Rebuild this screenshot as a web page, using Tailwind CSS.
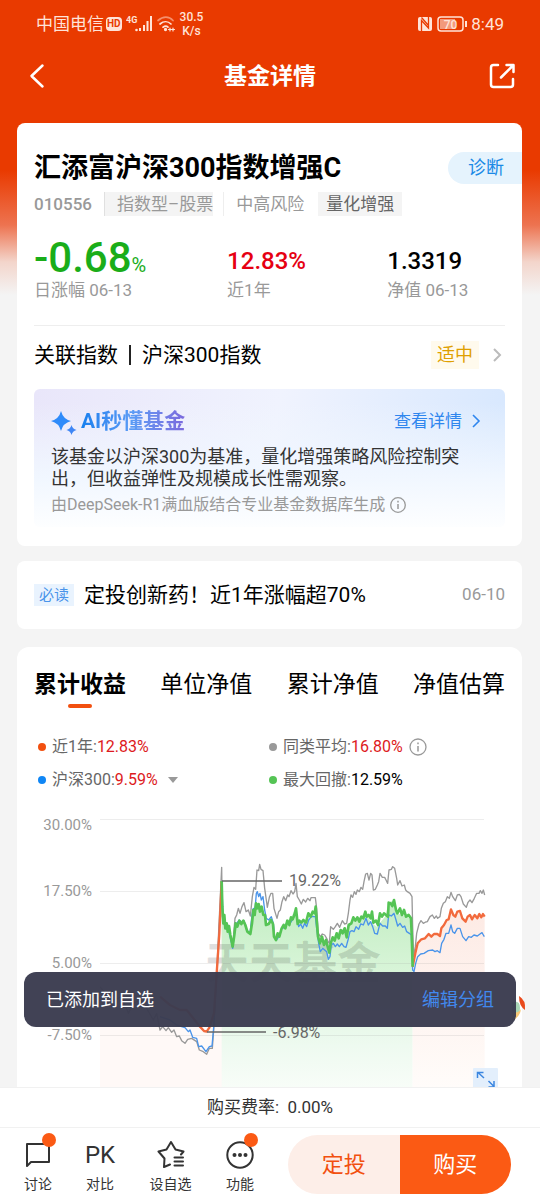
<!DOCTYPE html>
<html lang="zh-CN">
<head>
<meta charset="utf-8">
<meta name="viewport" content="width=device-width, initial-scale=1">
<title>基金详情</title>
<script src="https://cdn.jsdelivr.net/npm/@tailwindcss/browser@4"></script>
</head>
<body class="flex h-screen flex-col overflow-hidden bg-[#f4f4f4] font-['Roboto','Noto_Sans_CJK_SC',sans-serif] text-black">

<div class="relative flex min-h-0 flex-1 flex-col overflow-hidden bg-[linear-gradient(to_bottom,#e93a00_170px,#ed7350_225px,#f3d5cb_262px,#f4f4f4_295px)]">

  <!-- Status bar -->
  <div class="flex h-11 shrink-0 items-center pr-9 pl-9 pt-1 text-[#ffe3d8]">
    <span class="text-[17px] leading-5">中国电信</span>
    <span class="ml-0.5 rounded-sm bg-[#ffe3d8] px-px text-[10px] leading-[14px] font-bold text-[#e93a00]">HD</span>
    <svg class="ml-1 h-5 w-7" viewBox="0 0 28 20" fill="currentColor">
      <text x="0" y="9" font-size="9" font-weight="700" font-family="Roboto">4G</text>
      <circle cx="10.500" cy="16" r="1.300"/><path d="M13 14h2v3h-2zM17 11h2v6h-2zM20.500 7h2v10h-2zM24 2h2v15h-2z"/>
    </svg>
    <svg class="ml-0.5 h-5 w-5" viewBox="0 0 20 20" fill="none" stroke="currentColor" stroke-width="1.700" stroke-linecap="round">
      <path d="M2 6.500C7 2 13 2 17 6.500" opacity=".5"/><path d="M4 10c3.500-3 8-3 11 0"/><path d="M7 13.200c2-1.400 3.500-1.400 5 0"/>
      <circle cx="9.500" cy="15.500" r=".8" fill="currentColor"/><path d="M12.500 15.500h6M14 14v3M17 14v3" stroke-width="1.200"/>
    </svg>
    <span class="ml-1 text-center text-[12px] leading-[14px] font-medium">30.5<br>K/s</span>
    <svg class="ml-auto h-4 w-4" viewBox="0 0 16 16">
      <rect x="1" y="1" width="14" height="14" rx="2" fill="#ffe3d8"/>
      <path d="M4.500 15V4.500l7 7.500V1M4.500 1.500l7 8" fill="none" stroke="#e93a00" stroke-width="1.300"/>
    </svg>
    <svg class="ml-1 h-4 w-8" viewBox="0 0 32 16">
      <rect x="1" y="1" width="25" height="14" rx="3" fill="none" stroke="#ffe3d8" stroke-width="1.500"/>
      <rect x="3" y="3" width="15" height="10" fill="#f29a7c"/><path d="M29 5v6" stroke="#ffe3d8" stroke-width="2"/>
      <text x="13.500" y="12.500" text-anchor="middle" font-size="12" font-weight="500" font-family="Roboto" fill="#ffe3d8">70</text>
    </svg>
    <span class="ml-0.5 text-[17px] leading-5">8:49</span>
  </div>

  <!-- Title bar -->
  <header class="grid h-[79px] shrink-0 grid-cols-3 items-center px-6 pb-3.5 text-white">
    <button type="button" aria-label="返回" class="flex size-7 items-center justify-center">
      <svg class="size-7" viewBox="0 0 28 28" fill="none" stroke="currentColor" stroke-width="2.500" stroke-linecap="round" stroke-linejoin="round"><path d="M18.500 2.500 7.500 13 18.500 23.500"/></svg>
    </button>
    <h1 class="text-center text-[23px] leading-7 font-bold">基金详情</h1>
    <button type="button" aria-label="分享" class="flex size-7 items-center justify-center justify-self-end">
      <svg class="size-7" viewBox="0 0 28 28" fill="none" stroke="currentColor" stroke-width="2.500" stroke-linecap="round" stroke-linejoin="round"><path d="M10 2H5.500Q3 2 3 4.500v17Q3 24 5.500 24h17q2.500 0 2.500-2.500V16M13 14.500 25 2.500M18.500 2H25.500v7"/></svg>
    </button>
  </header>

  <main class="flex flex-col pr-[18px] pl-[17px]">
    <!-- Fund summary -->
    <section class="flex flex-col rounded-lg bg-white px-[17px] pt-[25px] pb-[19px]">
      <div class="flex items-center justify-between">
        <h2 class="text-[27px] leading-10 font-bold">汇添富沪深300指数增强C</h2>
        <button type="button" class="-mr-[17px] rounded-l-full bg-[#e5f3fd] py-1 pr-[18px] pl-5 text-[18px] leading-6 text-[#1b8ae6]">诊断</button>
      </div>
      <div class="mt-1 flex items-center text-[17px] leading-6 text-[#999]">
        <span class="font-medium">010556</span>
        <span class="ml-3 border-l border-[#e0e0e0] bg-[#f4f4f4] pl-3">指数型–股票</span>
        <span class="ml-2.5 border-l border-[#eee] pl-3">中高风险</span>
        <span class="ml-3.5 bg-[#f4f4f4] px-2 text-[#666]">量化增强</span>
      </div>
      <dl class="mt-[22px] flex leading-[34px]">
        <div class="flex w-[41%] flex-col-reverse">
          <dt class="text-[17px] leading-6 text-[#999]">日涨幅 06-13</dt>
          <dd class="text-[42px] leading-10 font-medium text-[#1aad19]">-0.68<span class="text-[20px] leading-none font-normal">%</span></dd>
        </div>
        <div class="flex w-[34%] flex-col-reverse">
          <dt class="text-[17px] leading-6 text-[#999]">近1年</dt>
          <dd class="text-[24px] font-medium text-[#e60012]">12.83%</dd>
        </div>
        <div class="flex flex-col-reverse">
          <dt class="text-[17px] leading-6 text-[#999]">净值 06-13</dt>
          <dd class="text-[24px] font-medium">1.3319</dd>
        </div>
      </dl>
      <a href="#" class="mt-[23px] flex items-center border-t border-[#eee] pt-[13px] text-[21px] leading-8">
        <span>关联指数</span><span class="mx-[11px] h-5 w-0.5 bg-[#222]"></span><span>沪深300指数</span>
        <span class="ml-auto bg-[#fffaed] px-1.5 text-[18px] leading-7 text-[#dfa000]">适中</span>
        <svg class="ml-2.5 h-4 w-4" viewBox="0 0 16 16" fill="none" stroke="#bbb" stroke-width="2"><path d="m5 2 6 6-6 6"/></svg>
      </a>
      <div class="mt-[18px] rounded-md bg-[linear-gradient(to_bottom,#ffffff00_10%,#f1f7ff_65%,#fdfeff),linear-gradient(100deg,#e9e6fa,#f0f3fe_50%,#d6e7fe)] px-[17px] pt-[18px] pb-2.5">
        <div class="flex items-center">
          <svg class="h-7 w-7" viewBox="0 0 28 28"><path d="M10 4q2 8 10 10-8 2-10 10-2-8-10-10 8-2 10-10z" fill="#2f8bfa"/><path d="M20.500 18q1 4 5 5-4 1-5 5-1-4-5-5 4-1 5-5z" fill="#3f86f5"/></svg>
          <h3 class="ml-0.5 bg-linear-to-r from-[#1580ee] via-[#5b9bf5] to-[#7a68dd] bg-clip-text text-[21px] leading-7 font-bold text-transparent">AI秒懂基金</h3>
          <a href="#" class="mr-1 ml-auto flex items-center gap-1.5 text-[17px] leading-6 text-[#2f86ee]">查看详情
            <svg class="h-4 w-4" viewBox="0 0 16 16" fill="none" stroke="currentColor" stroke-width="1.600"><path d="m5 2 6 6-6 6"/></svg></a>
        </div>
        <p class="mt-[11px] mr-4 text-[18px] leading-[22px] text-[#333]">该基金以沪深300为基准，量化增强策略风险控制突出，但收益弹性及规模成长性需观察。</p>
        <p class="mt-[3px] flex items-center text-[16px] leading-6 text-[#999]">由DeepSeek-R1满血版结合专业基金数据库生成
          <svg class="ml-1 size-[18px]" viewBox="0 0 18 18" fill="none" stroke="#999" stroke-width="1.300"><circle cx="9" cy="9" r="7.300"/><path d="M9 8v5M9 4.800v1.600" stroke-width="1.500"/></svg></p>
      </div>
    </section>

    <!-- Notice -->
    <a href="#" class="mt-[15px] flex h-[68px] items-center rounded-lg bg-white px-[17px]">
      <span class="bg-[#e9f3fe] px-[5px] text-[15px] leading-[22px] text-[#4a94ea]">必读</span>
      <span class="ml-2.5 text-[21px] leading-8">定投创新药！近1年涨幅超70%</span>
      <span class="ml-auto text-[17px] text-[#999]">06-10</span>
    </a>

    <!-- Performance -->
    <section class="mt-[18px] rounded-t-xl bg-white">
      <div role="tablist" class="flex justify-between px-[17px] pt-[22px] text-[23px] leading-8">
        <button type="button" role="tab" aria-selected="true" class="flex flex-col items-center font-bold">累计收益<span class="mt-[3px] h-1 w-6 rounded-full bg-[#f2500f]"></span></button>
        <button type="button" role="tab" class="self-start">单位净值</button>
        <button type="button" role="tab" class="self-start">累计净值</button>
        <button type="button" role="tab" class="self-start">净值估算</button>
      </div>
      <div class="mt-[27px] grid grid-cols-[231px_1fr] gap-y-[9px] pr-[17px] pl-[21px] text-[16px] leading-6 text-[#666]">
        <div class="flex items-center"><i class="mr-1.5 size-2 rounded-full bg-[#f2500f]"></i>近1年:<span class="text-[#dd1a21]">12.83%</span></div>
        <div class="flex items-center"><i class="mr-1.5 size-2 rounded-full bg-[#999]"></i>同类平均:<span class="text-[#dd1a21]">16.80%</span>
          <svg class="ml-1.5 size-[18px]" viewBox="0 0 18 18" fill="none" stroke="#999" stroke-width="1.300"><circle cx="9" cy="9" r="8"/><path d="M9 8v5.500M9 4.500v1.800" stroke-width="1.500"/></svg></div>
        <div class="flex items-center"><i class="mr-1.5 size-2 rounded-full bg-[#0f86f5]"></i>沪深300:<span class="text-[#dd1a21]">9.59%</span>
          <svg class="ml-2.5 h-2 w-2.5" viewBox="0 0 10 8"><path d="M0 1h10L5 7z" fill="#999"/></svg></div>
        <div class="flex items-center"><i class="mr-1.5 size-2 rounded-full bg-[#55c455]"></i>最大回撤:<span class="text-black">12.59%</span></div>
      </div>

      <svg class="mt-2 block w-full" viewBox="17 800 505 300" font-family="Roboto, 'Noto Sans CJK SC', sans-serif">
        <defs>
          <linearGradient id="gf" x1="0" y1="0" x2="0" y2="1"><stop offset="0" stop-color="#bdebbd"/><stop offset=".5" stop-color="#dcf6dc"/><stop offset=".8" stop-color="#eefaf0"/><stop offset="1" stop-color="#f8fdf8"/></linearGradient>
          <linearGradient id="of" x1="0" y1="0" x2="0" y2="1"><stop offset="0" stop-color="#fdeae4"/><stop offset="1" stop-color="#fffcfa"/></linearGradient>
        </defs>
        <path d="M100 988L130 998 160 1008 180 1005 200 1028 207 1032 214 1000 222 882V1087H100z" fill="#fff9f7"/>
        <g transform="translate(190 800) scale(.33333)">
          <path fill="url(#gf)" d="M95 243 100 370 106 385 113 395 121 405 128 440 137 370 148 362 160 362 172 395 181 402 190 330 198 310 206 312 215 320 225 345 228 375 243 360 249 372 252 410 258 420 275 385 292 362 303 352 318 325 323 372 340 360 348 368 362 350 377 320 384 410 396 410 413 440 418 458 428 412 440 400 452 390 464 385 470 412 476 375 492 355 510 352 526 335 542 365 560 380 585 350 596 308 612 300 622 340 663 355 668 500V863H95z"/>
          <path fill="url(#of)" d="M668 500 676 460 683 430 705 415 716 402 742 402 750 408 754 385 770 360 783 328 796 350 810 333 827 365 840 345 854 345 868 342 884 350V863H668z"/>
        </g>
        <g stroke="#999" stroke-opacity=".18"><path d="M100 819.500H484M100 891.500H484M100 963.500H484M100 1035.500H484"/></g>
        <text x="205" y="979" font-size="44" font-weight="700" fill="#000" fill-opacity=".12">天天基金</text>

        <g fill="none" stroke-linejoin="round" transform="translate(190 800) scale(.33333)">
          <g stroke="#999" stroke-width="4">
            <polyline points="-270,560 -250,585 -230,600 -205,590 -185,640 -170,610 -150,600 -130,625 -110,660 -100,640 -90,690 -82,680 -72,692 -65,683 -55,697 -48,690 -40,710 -32,708 -25,722 -15,730 -7,718 5,715 20,725 28,750 40,755 50,763 58,745 67,745 71,690 82,480 95,202 97,350 105,380 112,370 120,400 128,440 135,355 140,345 145,325 150,340 156,320 162,308 168,335 175,330 181,348 187,290 192,262 197,268 201,210 206,212 209,193 213,208 219,212 224,265 229,300 232,322 238,292 243,280 248,280 252,325 261,355 266,335 271,330 276,305 281,290 287,302 293,285 297,290 303,272 309,282 314,275 318,250 322,290 328,300 334,312 340,298 347,306 353,295 360,302 363,293 376,293 380,325 385,400 391,410 397,402 404,405 410,415 414,425 418,430 422,380 430,388 436,380 442,370 449,382 457,362 464,372 470,370 475,340 480,300 483,285 488,292 493,275 498,283 502,270 508,275 513,262 518,268 522,245 527,222 532,220 537,240 542,220 546,225 550,270 556,268 562,255 566,245 570,220 577,232 584,232 588,240 593,250 597,210 604,208 608,200 614,205 620,235 623,255 630,242 636,258 643,255 647,270 652,275 660,280 666,290 668,380 671,470 676,440 680,400 687,372 693,362 700,370 707,366 712,365 720,350 727,345 733,355 739,348 743,355 750,350 754,325 760,310 766,305 772,290 778,295 783,277 788,290 796,302 802,285 808,283 813,290 820,312 829,322 834,307 840,300 846,308 853,295 860,280 867,280 871,272 876,280 880,270 884,285"/>
          </g>
          <polyline stroke="#4a94ea" stroke-width="4" points="-90,650 -60,660 -40,675 -15,683 -5,695 0,690 8,712 20,715 26,740 35,738 48,755 58,740 66,738 71,683 82,500 95,250 100,360 106,385 112,375 120,410 128,445 134,395 140,370 148,360 156,368 162,362 170,390 180,400 186,345 190,325 194,340 199,280 202,275 206,290 210,280 214,300 219,290 224,330 229,355 236,360 244,350 250,370 254,410 260,420 268,408 275,385 286,383 292,362 298,373 308,358 318,335 326,380 332,372 338,385 344,370 350,380 356,360 364,350 376,350 380,385 386,430 391,455 398,445 404,450 410,455 415,478 420,470 424,435 430,430 436,440 442,432 448,440 455,430 462,440 468,442 474,420 480,395 486,392 492,395 498,380 506,388 512,372 520,375 528,355 535,375 542,365 548,380 554,400 562,402 570,370 578,378 586,378 592,385 596,345 604,348 612,340 618,360 623,378 630,370 638,382 644,378 650,395 658,400 664,405 668,510 672,515 677,490 683,470 692,462 702,460 715,452 728,450 735,455 742,452 750,458 755,430 762,418 768,400 776,400 783,375 788,395 794,400 802,385 810,385 818,410 828,422 836,410 844,412 852,405 862,408 870,402 876,398 880,405 883,410"/>
          <g stroke="#f26a3d" stroke-width="7">
            <polyline points="-90,590 -60,615 -30,630 -10,630 10,655 30,680 42,693 50,695 58,683 72,640 80,520 88,400 95,245"/>
            <polyline points="668,500 676,460 683,430 694,418 705,415 716,402 724,410 732,402 742,402 750,408 754,385 762,375 770,360 776,358 783,328 790,345 796,350 802,335 810,333 817,355 827,365 833,350 840,345 846,358 854,345 862,355 868,342 874,352 879,342 884,350"/>
          </g>
          <polyline stroke="#55c455" stroke-width="8" points="95,243 97,320 100,370 103,345 106,385 110,370 113,395 117,378 121,405 128,440 133,405 137,370 142,380 148,362 154,372 160,362 166,375 172,395 181,402 186,370 190,330 194,345 198,310 202,325 206,312 210,335 215,320 220,345 225,345 228,375 236,372 243,360 249,372 252,410 258,420 263,400 268,410 275,385 281,375 286,385 292,362 298,375 303,352 308,358 313,345 318,325 323,372 328,362 334,368 340,360 348,368 355,340 362,350 368,335 374,340 377,320 380,360 384,410 390,430 396,410 402,435 408,420 413,440 418,458 422,430 428,412 434,422 440,400 446,415 452,390 458,400 464,385 470,412 476,375 484,370 490,352 496,362 502,352 508,365 514,350 520,355 526,335 530,350 536,345 542,355 546,335 550,368 558,362 564,375 570,340 576,350 582,340 588,345 594,350 596,308 602,310 607,318 612,300 618,330 622,340 630,325 636,345 642,330 648,350 656,345 663,355 665,400 668,500"/>
        </g>
        <g stroke="#666" stroke-width="1.500"><path d="M222 881H282M207 1032H266"/></g>
        <g fill="#666" font-size="16"><text x="289" y="886">19.22%</text><text x="273" y="1038">-6.98%</text></g>
        <g fill="#999" font-size="15" text-anchor="end"><text x="92" y="830">30.00%</text><text x="92" y="896">17.50%</text><text x="92" y="968">5.00%</text><text x="92" y="1040">-7.50%</text></g>
        <rect x="473" y="1068" width="25" height="25" rx="1" fill="#e3effc"/>
        <path d="M484 1078 478 1072.500M477.500 1078V1072.500H483.500M488.500 1081 494 1086.500M488.500 1087H494V1081" fill="none" stroke="#3b86e0" stroke-width="1.500"/>
      </svg>
    </section>
  </main>

  <!-- Mascot edge peeking out behind the toast -->
  <svg class="absolute right-2 bottom-[61px] h-8 w-5" viewBox="0 0 20 32"><path d="M0 8Q8 6 8 14 8 22 0 26z" fill="#a8d5b5"/><path d="M0 19Q7 19 9 15 8 23 0 27z" fill="#f7c978"/><path d="M7 2Q14 6 13 16 7 12 7 2z" fill="#e94a1c"/></svg>

  <!-- Toast -->
  <div role="status" class="absolute inset-x-6 bottom-[60px] flex h-[55px] items-center justify-between rounded-xl bg-[#3b3c50]/97 px-[22px] text-[18px] leading-6 text-white">
    <span>已添加到自选</span>
    <button type="button" class="text-[#4189ee]">编辑分组</button>
  </div>
</div>

<!-- Bottom bar -->
<footer class="shrink-0 bg-white text-[#333]">
  <p class="border-y border-[#f1f1f1] text-center text-[17px] leading-[39px]">购买费率:&nbsp; 0.00%</p>
  <div class="flex h-[72px] items-center pr-[29px] pl-[7px]">
    <nav class="flex pt-[7px] text-[14px] leading-5">
      <button type="button" class="flex w-[62px] flex-col items-center gap-[5px]">
        <span class="relative"><svg class="size-7" viewBox="0 0 28 28" fill="none" stroke="#333" stroke-width="2" stroke-linejoin="round"><path d="M3 3H25V21H7L3 25z"/></svg><i class="absolute -top-2 -right-1 size-3.5 rounded-full bg-[#fb5a14]"></i></span>
        讨论</button>
      <button type="button" class="flex w-[62px] flex-col items-center gap-[5px]">
        <span class="text-[24px] leading-7">PK</span>对比</button>
      <button type="button" class="flex w-[79px] flex-col items-center gap-[5px]">
        <svg class="size-7" viewBox="0 0 28 28" fill="none" stroke="#333" stroke-width="2" stroke-linejoin="round" stroke-linecap="round"><path d="M13 23.500 7 26 7.500 17.500 1.500 10.500 9.500 8.500 14 1 18.500 8.500 26.500 10.500 24 13.500M17.500 16.500H26M17.500 20.500H26M17.500 24.500H26"/></svg>
        设自选</button>
      <button type="button" class="flex w-[60px] flex-col items-center gap-[5px]">
        <span class="relative"><svg class="size-7" viewBox="0 0 28 28"><circle cx="14" cy="14" r="12.700" fill="none" stroke="#333" stroke-width="2"/><g fill="#333"><circle cx="8.500" cy="14" r="2"/><circle cx="14" cy="14" r="2"/><circle cx="19.500" cy="14" r="2"/></g></svg><i class="absolute -top-2 -right-1 size-3.5 rounded-full bg-[#fb5a14]"></i></span>
        功能</button>
    </nav>
    <div class="ml-[18px] flex h-[59px] flex-1 overflow-hidden rounded-full text-[22px]">
      <button type="button" class="flex-1 bg-[#fdeee8] text-[#f2500f]">定投</button>
      <button type="button" class="flex-1 bg-[#fb5a14] text-white">购买</button>
    </div>
  </div>
</footer>
</body>
</html>
